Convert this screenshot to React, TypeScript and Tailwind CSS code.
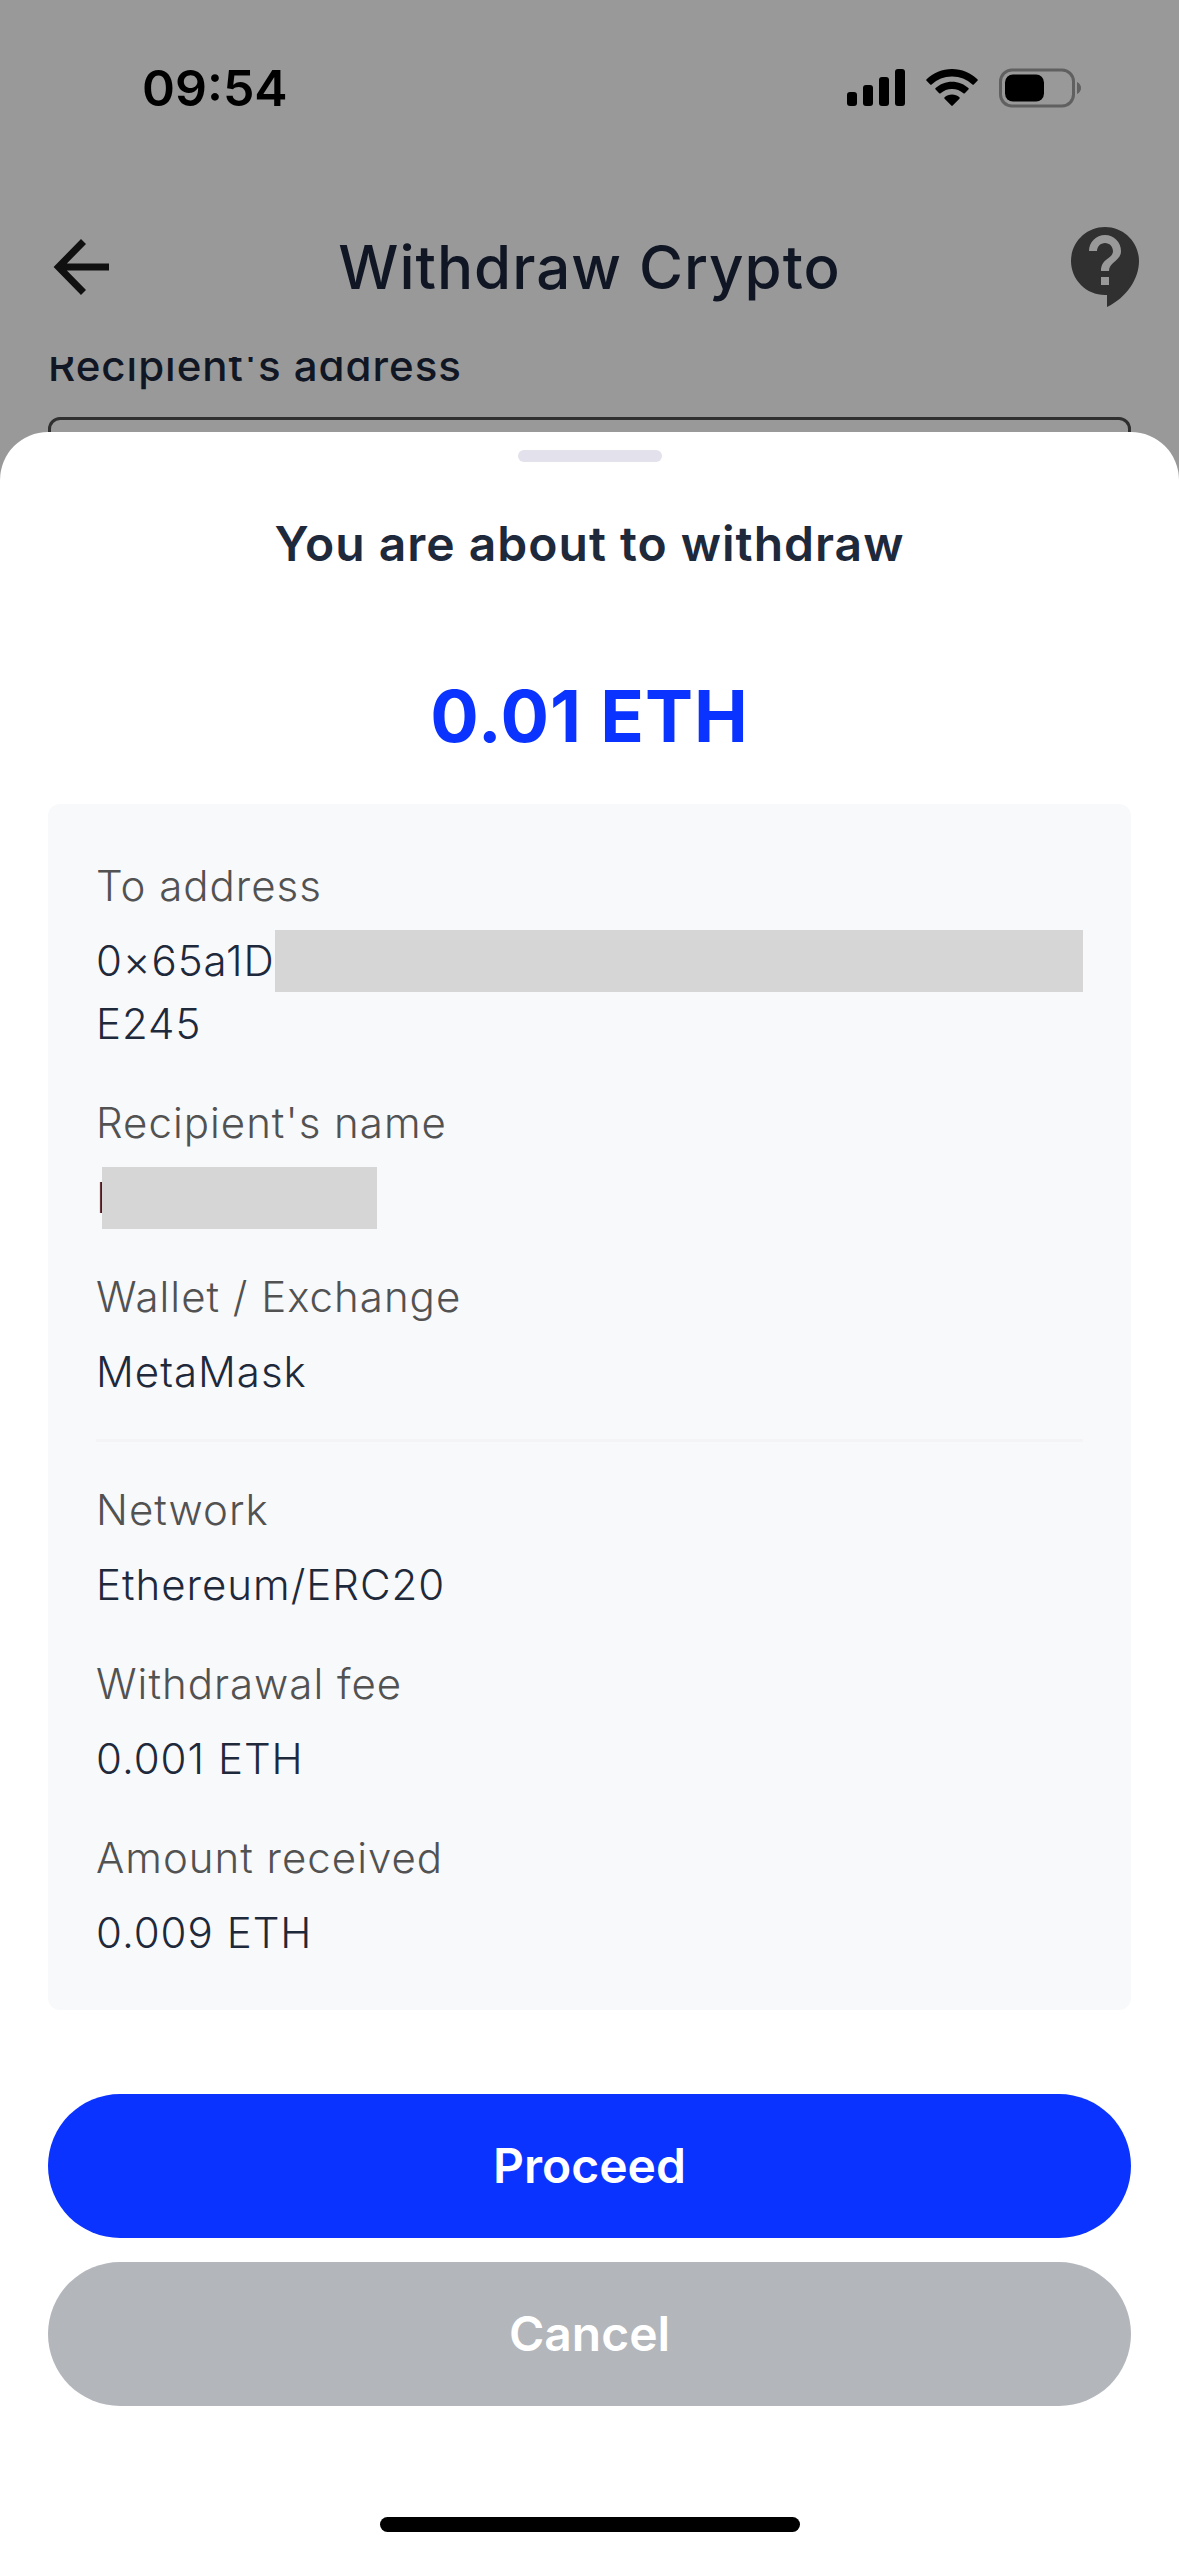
import { useState } from "react";
import type { ReactNode } from "react";

export default function App() {
  const [address, setAddress] = useState("");

  return (
    <div className="flex min-h-screen flex-col bg-[#999999] font-['Inter',sans-serif]">
      <StatusBar />

      <header className="flex h-[181px] items-center justify-between px-6">
        <button type="button" aria-label="Back" className="flex w-[102px] justify-end">
          <BackIcon />
        </button>
        <h1 className="text-[60px] font-medium leading-[90px] tracking-[1px] text-[#101623]">
          Withdraw Crypto
        </h1>
        <button type="button" aria-label="Help" className="flex w-[102px] justify-end">
          <HelpIcon />
        </button>
      </header>

      {/* form scrolled underneath the header */}
      <section className="h-[75px] overflow-hidden px-12">
        <label
          htmlFor="recipient-address"
          className="-mt-[23px] block text-[42px] font-medium leading-[63px] tracking-[1px] text-[#101623]"
        >
          Recipient's address
        </label>
        <input
          id="recipient-address"
          value={address}
          onChange={(e) => setAddress(e.target.value)}
          className="mt-5 block h-36 w-full rounded-xl border-3 border-[#303030] bg-transparent px-9 text-[42px]"
        />
      </section>

      <section
        role="dialog"
        aria-labelledby="sheet-title"
        className="flex flex-1 flex-col rounded-t-[48px] bg-white px-12 pb-6 pt-[18px]"
      >
        <div className="mx-auto h-3 w-36 rounded-full bg-[#e3e1ec]" />
        <h2
          id="sheet-title"
          className="mt-[46px] text-center text-[48px] font-semibold leading-[72px] tracking-[1px] text-[#1e293b]"
        >
          You are about to withdraw
        </h2>
        <p className="mt-[82px] text-center text-[72px] font-bold leading-[108px] tracking-[1px] text-[#0a33ff]">
          0.01 ETH
        </p>

        <dl className="mt-[34px] flex flex-col gap-9 rounded-xl bg-[#f8f9fb] px-12 pb-[46px] pt-[50px] text-[42px] font-light leading-[63px] tracking-[1px]">
          <Detail label="To address">
            <span className="flex items-center">
              0×65a1D
              <span className="h-[62px] flex-1 bg-[#d6d6d6]" />
            </span>
            <span className="block">E245</span>
          </Detail>
          <Detail label="Recipient's name">
            <span className="flex items-center">
              <span className="w-1.5">I</span>
              <span className="relative h-[62px] w-[275px] bg-[#d6d6d6]" />
            </span>
          </Detail>
          <Detail label="Wallet / Exchange">MetaMask</Detail>
          <div className="h-[3px] bg-[#f4f4f6]" />
          <Detail label="Network">Ethereum/ERC20</Detail>
          <Detail label="Withdrawal fee">0.001 ETH</Detail>
          <Detail label="Amount received">0.009 ETH</Detail>
        </dl>

        <div className="mt-[84px] flex flex-col gap-6">
          <button
            type="button"
            className="h-36 rounded-full bg-[#0a33ff] text-[48px] font-semibold leading-[72px] text-white"
          >
            Proceed
          </button>
          <button
            type="button"
            className="h-36 rounded-full bg-[#b3b6bb] text-[48px] font-semibold leading-[72px] text-white"
          >
            Cancel
          </button>
        </div>

        <div className="mx-auto mt-auto h-[15px] w-[420px] rounded-full bg-black" />
      </section>
    </div>
  );
}

function Detail({ label, children }: { label: string; children: ReactNode }) {
  return (
    <div className="flex flex-col gap-3">
      <dt className="text-[#525252]">{label}</dt>
      <dd className="text-[#1e293b]">{children}</dd>
    </div>
  );
}

function StatusBar() {
  return (
    <div className="flex h-44 items-center justify-between pl-[142px] pr-24">
      <span className="text-[50px] font-semibold leading-[60px] text-black">09:54</span>
      <div className="flex items-center gap-[21px]">
        <SignalIcon />
        <WifiIcon />
        <BatteryIcon />
      </div>
    </div>
  );
}

function SignalIcon() {
  return (
    <svg viewBox="0 0 58 38" className="h-[38px] w-[58px]" fill="#000">
      <rect x="0" y="23" width="10" height="14" rx="3" />
      <rect x="16" y="16" width="10" height="21" rx="3" />
      <rect x="32" y="8" width="10" height="29" rx="3" />
      <rect x="48" y="0" width="10" height="37" rx="3" />
    </svg>
  );
}

function WifiIcon() {
  return (
    <svg viewBox="0 0 52 38" className="h-[38px] w-[52px]" fill="#000">
      <path d="M26 0C16.200 0 7.200 3.800 0.600 10.200a1 1 0 0 0 0 1.500L4.200 15.400a1 1 0 0 0 1.400 0A29.500 29.500 0 0 1 26 7.400a29.500 29.500 0 0 1 20.400 8a1 1 0 0 0 1.400 0L51.400 11.700a1 1 0 0 0 0-1.500C44.800 3.800 35.800 0 26 0Z" />
      <path d="M26 12.700c-6.300 0-12 2.400-16.400 6.400a1 1 0 0 0 0 1.500L13.200 24.200a1 1 0 0 0 1.400 0A17 17 0 0 1 26 19.900a17 17 0 0 1 11.400 4.300a1 1 0 0 0 1.400 0L42.400 20.600a1 1 0 0 0 0-1.500C38 15.100 32.300 12.700 26 12.700Z" />
      <path d="M26 25.500c-2.800 0-5.400 1-7.400 2.700a1 1 0 0 0 0 1.500L25.300 36.600a1 1 0 0 0 1.400 0L33.400 29.700a1 1 0 0 0 0-1.500C31.400 26.500 28.800 25.500 26 25.500Z" />
    </svg>
  );
}

function BatteryIcon() {
  return (
    <svg viewBox="0 0 84 40" className="h-10 w-[84px]">
      <rect x="1.500" y="2" width="73" height="36" rx="11.500" fill="none" stroke="#606060" strokeWidth="3" />
      <rect x="6" y="6.500" width="39" height="27" rx="8" fill="#000" />
      <path d="M78 14c2.500 1 4 3.400 4 6s-1.500 5-4 6Z" fill="#606060" />
    </svg>
  );
}

function BackIcon() {
  return (
    <svg viewBox="0 0 90 90" className="size-[90px]" fill="none" stroke="#101010" strokeWidth="7">
      <path d="M73 45H22M47.500 19.500 22.500 45 47.500 70.500" />
    </svg>
  );
}

function HelpIcon() {
  return (
    <svg viewBox="0 0 24 24" className="size-24 shrink-0" fill="#303030">
      <path d="M11.500 2C6.810 2 3 5.810 3 10.500S6.810 19 11.500 19h.5v3c4.860-2.340 8-7 8-11.500C20 5.810 16.190 2 11.500 2zm1 14.500h-2v-2h2v2zm0-3.500h-2c0-3.250 3-3 3-5 0-1.100-.9-2-2-2s-2 .9-2 2h-2c0-2.210 1.790-4 4-4s4 1.790 4 4c0 2.500-3 2.750-3 5z" />
    </svg>
  );
}
